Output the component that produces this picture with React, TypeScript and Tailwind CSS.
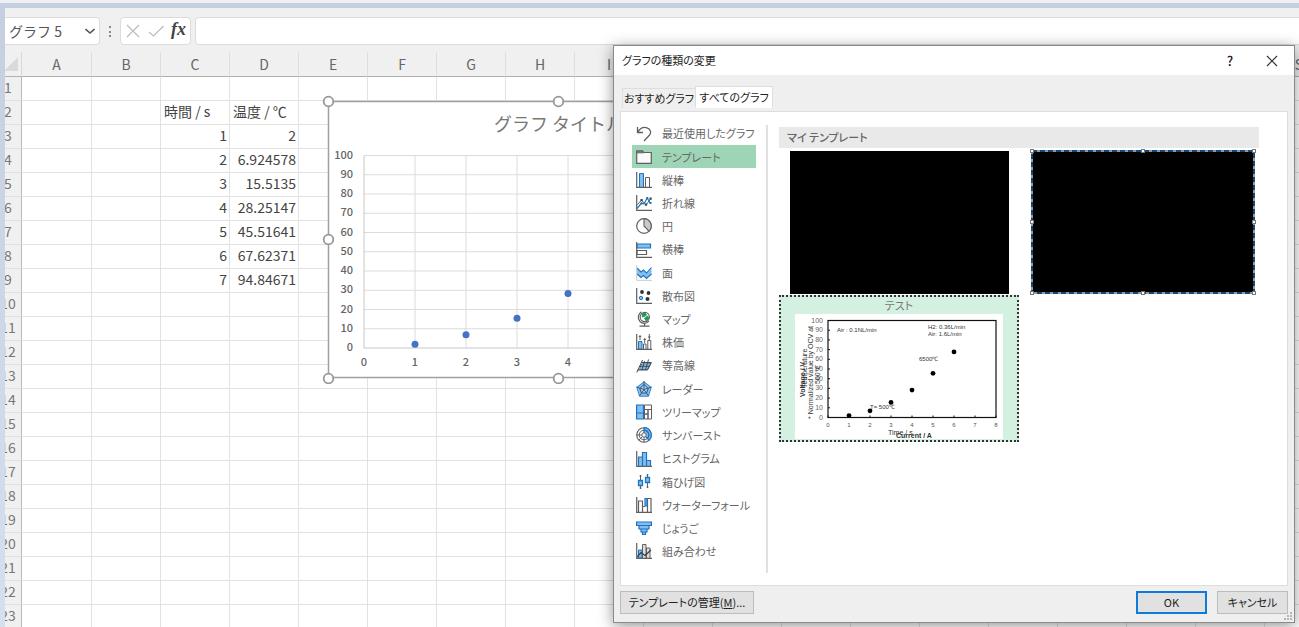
import type { ReactNode } from "react";

const columns = "ABCDEFGHIJKLMNOPQRS".split("");
const rowCount = 24;

const cells: Record<string, string> = {
  C2: "時間 / s",
  D2: "温度 / ℃",
  C3: "1",
  D3: "2",
  C4: "2",
  D4: "6.924578",
  C5: "3",
  D5: "15.5135",
  C6: "4",
  D6: "28.25147",
  C7: "5",
  D7: "45.51641",
  C8: "6",
  D8: "67.62371",
  C9: "7",
  D9: "94.84671",
};

const points = [
  [1, 2],
  [2, 6.92],
  [3, 15.51],
  [4, 28.25],
  [5, 45.52],
  [6, 67.62],
  [7, 94.85],
];

const G = "#5f5f5f";
const B = "#1b74c4";
const F = "#83beec";

const chartTypes: { label: string; icon: ReactNode }[] = [
  {
    label: "最近使用したグラフ",
    icon: (
      <path d="M1.5 1v5.5H7M1.8 6.2C4 2.500 7.500 .8 11 1.800c3.500 1 4.600 4.700 2.600 7.200L8 15" fill="none" stroke={G} strokeWidth="1.300" />
    ),
  },
  {
    label: "テンプレート",
    icon: (
      <>
        <path d="M.7 2h6l1 1.500h7.600V14.300H.7z" fill="#fafafa" stroke={G} strokeWidth="1.200" />
        <path d="M.7 2h6l.8 1.800H.7z" fill="#8a8a8a" stroke={G} />
      </>
    ),
  },
  {
    label: "縦棒",
    icon: (
      <>
        <path d="M3.500 15V1.500h4V15" fill={F} stroke={B} />
        <path d="M9.500 15V5.500h4V15" fill="#fff" stroke={G} />
        <path d="M.7 0v15.300H16" fill="none" stroke={G} strokeWidth="1.200" />
      </>
    ),
  },
  {
    label: "折れ線",
    icon: (
      <>
        <path d="M1.500 9.500L5.500 5l4.500 5 4.500-6" fill="none" stroke={G} />
        <path d="M1 13.500L5.500 8 8 9l3.200-6 3 5" fill="none" stroke={B} strokeWidth="1.200" />
        <path d="M4.500 4h2.200v2.200H4.500zM9 8.500h2.200v2.200H9zM13.500 2.500h2.200v2.200h-2.200z" fill="#444" />
        <path d="M4.500 7.500h2v2h-2zM10.200 2h2v2h-2zM13.500 7h2v2h-2z" fill={B} />
        <path d="M.7 0v15.300H16" fill="none" stroke={G} strokeWidth="1.200" />
      </>
    ),
  },
  {
    label: "円",
    icon: (
      <>
        <circle cx="8" cy="8" r="7.300" fill="#fff" stroke={G} strokeWidth="1.200" />
        <path d="M8 .7V8l5 5.200A7.300 7.300 0 0 0 8 .7z" fill="#c9c9c9" stroke={G} strokeWidth="1.100" />
      </>
    ),
  },
  {
    label: "横棒",
    icon: (
      <>
        <path d="M1 2h13.500v4H1z" fill={F} stroke={B} strokeWidth="1.200" />
        <path d="M1 8.500h9.500v4H1z" fill="#fff" stroke={G} strokeWidth="1.200" />
        <path d="M.7 0v15.300H16" fill="none" stroke={G} strokeWidth="1.200" />
      </>
    ),
  },
  {
    label: "面",
    icon: (
      <>
        <path d="M1 3.500l4 3.500 2.500-2 3 3L15.500 3v6l-5 4.500-3-3-2.500 2-4-3z" fill={F} />
        <path d="M1 3l4 4 2.500-2 3 3L15.500 2.500M1 9l4 3.500 2.500-2 3 3 5-4.500" fill="none" stroke={B} strokeWidth="1.100" />
        <path d="M.7 0v15.300H16" fill="none" stroke="#c8c8c8" />
      </>
    ),
  },
  {
    label: "散布図",
    icon: (
      <>
        <circle cx="6" cy="4" r="1.900" fill="#333" />
        <circle cx="12.500" cy="5" r="1.900" fill="#333" />
        <circle cx="11.500" cy="11" r="2" fill="#333" />
        <circle cx="5" cy="10" r="1.700" fill={F} stroke={B} />
        <path d="M.7 0v15.300H16" fill="none" stroke={G} strokeWidth="1.200" />
      </>
    ),
  },
  {
    label: "マップ",
    icon: (
      <>
        <circle cx="8.800" cy="6" r="4.600" fill="#fff" stroke={G} strokeWidth="1.100" />
        <path d="M6 3l3-1 1.500 2-2 1.500-2 .5zM8.500 7.500l3-2.500 1.500 1.500-2.500 3.500z" fill="#1d9b58" stroke="#1d9b58" />
        <path d="M5.500 .8A6.300 6.300 0 0 0 4 10.500c2.500 2.600 7 2.400 9-.5M8.500 12.500V15M3.500 15.200h10" fill="none" stroke={G} strokeWidth="1.300" />
      </>
    ),
  },
  {
    label: "株価",
    icon: (
      <>
        <path d="M2.500 15V7.500h3.500V15z" fill={F} stroke={B} />
        <path d="M7.500 15v-5h2.500v5M11.800 15V6.500h3V15" fill="#fff" stroke={G} />
        <path d="M4 1v5M2.800 2.500h2.400M8.700 4v5M7.500 5.500h2.400M13.300 0v6M12 3h2.600" fill="none" stroke={G} />
        <path d="M.7 0v15.300H16" fill="none" stroke={G} strokeWidth="1.200" />
      </>
    ),
  },
  {
    label: "等高線",
    icon: (
      <>
        <path d="M5.500 6l9.500-.5-3.500 6H3.500z" fill={F} stroke={B} strokeWidth=".8" />
        <path d="M.8 14.500L6.500 2M1.500 12h10L15.300 4.500H5M3.500 8.300H13M8.500 3L6 12M12.500 1.500L9.500 12" fill="none" stroke="#4a4a4a" />
      </>
    ),
  },
  {
    label: "レーダー",
    icon: (
      <>
        <path d="M8 .8l7.300 5.500-2.800 9h-9l-2.800-9z" fill={F} stroke={B} strokeWidth=".8" />
        <path d="M8 3.500l4.200 4L10.500 12h-5L3.800 7.500z" fill="#a9d2f2" stroke="#2f5474" />
        <path d="M8 0v8.500M.5 6L8 8.500M15.500 6L8 8.500M3.500 15L8 8.500l4.500 6.500" fill="none" stroke="#2f5474" strokeWidth=".9" />
      </>
    ),
  },
  {
    label: "ツリーマップ",
    icon: (
      <>
        <path d="M.6 1h6.900v8H.6zM.6 9h6.900v6H.6z" fill={F} stroke={B} strokeWidth="1.200" />
        <path d="M8.500 1h7v4.500h-7zM8.500 5.500h3.500V10H8.500zM12 5.500h3.500V15H12zM8.500 10H12v5H8.500z" fill="#fff" stroke={G} />
      </>
    ),
  },
  {
    label: "サンバースト",
    icon: (
      <>
        <circle cx="8" cy="8" r="7.300" fill="#fff" stroke={G} strokeWidth="1.100" />
        <path d="M8 .7a7.300 7.300 0 0 1 5 12.500L8 8z" fill={F} stroke={B} strokeWidth="1.200" />
        <circle cx="8" cy="8" r="4.800" fill="none" stroke={G} />
        <path d="M8 3.200a4.800 4.800 0 0 1 3.400 8.200" fill="none" stroke={B} strokeWidth="1.200" />
        <circle cx="8" cy="8" r="2.200" fill="#fff" stroke={G} />
        <path d="M.7 8h5M3 13l3.400-3.400M8 15.300v-5" stroke={G} fill="none" />
      </>
    ),
  },
  {
    label: "ヒストグラム",
    icon: (
      <>
        <path d="M2.500 15V6h4v9M6.500 15V1.500h4V15M10.500 15V9.500h4V15" fill={F} stroke={B} strokeWidth="1.200" />
        <path d="M.7 0v15.300H16" fill="none" stroke={G} strokeWidth="1.200" />
      </>
    ),
  },
  {
    label: "箱ひげ図",
    icon: (
      <>
        <path d="M4.500 1v14M11.500 0v14M3.500 2h2M3.500 14h2M10.500 1h2M10.500 13h2" stroke={G} fill="none" />
        <path d="M2.500 6.500h4v5h-4zM9.500 3.500h4v5h-4z" fill={F} stroke={B} strokeWidth="1.300" />
      </>
    ),
  },
  {
    label: "ウォーターフォール",
    icon: (
      <>
        <path d="M2.500 15V4h4v11M6.500 4v5.500h2.500M11.500 15V1.500H15V15M9 1.500h2.500" fill="#fff" stroke={G} strokeWidth="1.200" />
        <path d="M9 1.500h2v7.500H9z" fill={F} stroke={B} strokeWidth="1.200" />
        <path d="M.7 0v15.300H16" fill="none" stroke={G} strokeWidth="1.200" />
      </>
    ),
  },
  {
    label: "じょうご",
    icon: (
      <path d="M.6 2h14.800v3.500H.6zM3 5.500h10V9H3zM5 9h6v3H5zM6.500 12h3v2.500h-3z" fill={F} stroke={B} strokeWidth="1.200" />
    ),
  },
  {
    label: "組み合わせ",
    icon: (
      <>
        <path d="M2.500 15V7h3.500v8z" fill={F} stroke={B} />
        <path d="M6.500 15V1.500H10V15M10.500 15V5h3.500v10" fill="#dedede" stroke={G} />
        <path d="M1 14l4-4.500 4 3 6-5.500" fill="none" stroke="#3c3c3c" strokeWidth="1.200" />
        <path d="M.7 0v15.300H16" fill="none" stroke={G} strokeWidth="1.200" />
      </>
    ),
  },
];

function FormulaBar() {
  return (
    <div className="flex h-11 shrink-0 items-start gap-1 bg-[#f0f0f0] pt-[9px]">
      <div className="flex h-7 w-[95px] items-center rounded-r border border-l-0 border-[#dcdcdc] bg-white pl-1">
        <input
          aria-label="名前ボックス"
          defaultValue="グラフ 5"
          className="w-[76px] bg-transparent text-sm text-[#555] outline-none"
        />
        <button aria-label="名前の一覧">
          <svg className="size-[10px]" viewBox="0 0 10 10" fill="none" stroke="#555" strokeWidth="1.600">
            <path d="M0.500 3l4.500 4 4.500-4" />
          </svg>
        </button>
      </div>
      <svg className="mx-[3px] h-7 w-[6px]" viewBox="0 0 6 28" fill="#888">
        <path d="M2 9h2v2H2zM2 14h2v2H2zM2 18h2v2H2z" />
      </svg>
      <div className="flex h-7 w-[71px] items-center justify-between rounded border border-[#dcdcdc] bg-white px-1">
        <button aria-label="キャンセル">
          <svg className="size-4" viewBox="0 0 16 16" fill="none" stroke="#bcbcbc" strokeWidth="1.200">
            <path d="M2 2l12 12M14 2L2 14" />
          </svg>
        </button>
        <button aria-label="入力">
          <svg className="size-4" viewBox="0 0 16 16" fill="none" stroke="#bcbcbc" strokeWidth="1.200">
            <path d="M1 9l4.500 4L15.500 3" />
          </svg>
        </button>
        <button
          aria-label="関数の挿入"
          className="pb-1 font-['Liberation_Serif',serif] text-lg leading-5 font-bold text-[#444] italic"
        >
          fx
        </button>
      </div>
      <input
        aria-label="数式バー"
        className="h-7 min-w-0 flex-1 rounded-l border border-r-0 border-[#dcdcdc] bg-white px-2 text-sm outline-none"
      />
    </div>
  );
}

function Sheet() {
  return (
    <div className="min-h-0 flex-1 overflow-hidden bg-[#f0f0f0]">
      <table className="-ml-[10px] w-[1339px] table-fixed border-separate border-spacing-0 text-sm leading-5 text-[#444]">
        <colgroup>
          <col className="w-[27px]" />
          {columns.map((c) => (
            <col key={c} className={c === "A" ? "w-[70px]" : "w-[69px]"} />
          ))}
        </colgroup>
        <thead>
          <tr className="h-[25px] text-[#666]">
            <th className="border-r border-b border-r-[#d8d8d8] border-b-[#b0b0b0] p-0">
              <svg className="ml-auto mr-[3px] size-[14px]" viewBox="0 0 14 14">
                <path d="M14 0v14H0z" fill="#dadada" />
              </svg>
            </th>
            {columns.map((c) => (
              <th key={c} scope="col" className="border-r border-b border-r-[#dedede] border-b-[#b0b0b0] p-0 font-normal">
                {c}
              </th>
            ))}
          </tr>
        </thead>
        <tbody>
          {Array.from({ length: rowCount }, (_, i) => i + 1).map((r) => (
            <tr key={r} className="h-6">
              <th
                scope="row"
                className="border-r border-b border-r-[#b8b8b8] border-b-[#e2e2e2] p-0 pb-[3px] text-center font-normal text-[#777]"
              >
                {r}
              </th>
              {columns.map((c) => {
                const value = cells[c + r];
                return (
                  <td
                    key={c}
                    className={
                      "border-r border-b border-[#e2e2e2] bg-white p-0 pb-[3px] whitespace-nowrap " +
                      (r > 2 ? "pr-[2px] text-right" : "pl-[3px] text-left")
                    }
                  >
                    {value}
                  </td>
                );
              })}
            </tr>
          ))}
        </tbody>
      </table>
    </div>
  );
}

function SheetChart() {
  const px = (x: number) => 364 + x * 51;
  const py = (y: number) => 348 - y * 1.925;
  const ticks = [0, 10, 20, 30, 40, 50, 60, 70, 80, 90, 100];
  const xs = [0, 1, 2, 3, 4, 5, 6, 7, 8];
  return (
    <svg
      className="absolute top-[95px] left-[322px] h-[289px] w-[473px] font-['Noto_Sans_CJK_JP',sans-serif]"
      viewBox="322 95 473 289"
      role="img"
      aria-label="グラフ タイトル"
    >
      <rect x="328.500" y="101.500" width="460" height="276" fill="#fff" stroke="#a0a0a0" strokeWidth="1.500" />
      {ticks.map((t) => (
        <g key={t}>
          <path d={`M364 ${py(t)}H772`} stroke={t === 0 ? "#c8c8c8" : "#dcdcdc"} />
          <text x="353" y={py(t) + 3} textAnchor="end" fontSize="11" fontWeight="500" fill="#666">
            {t}
          </text>
        </g>
      ))}
      {xs.map((x) => (
        <g key={x}>
          <path d={`M${px(x)} 155.500V348`} stroke={x === 0 ? "#c8c8c8" : "#dcdcdc"} />
          <text x={px(x)} y="366" textAnchor="middle" fontSize="11" fontWeight="500" fill="#666">
            {x}
          </text>
        </g>
      ))}
      {points.map(([x, y]) => (
        <circle key={x} cx={px(x)} cy={py(y)} r="3.500" fill="#4472c4" />
      ))}
      <text x="559" y="131" textAnchor="middle" fontSize="18" fill="#777">
        グラフ タイトル
      </text>
      {[
        [328, 101],
        [558, 101],
        [788, 101],
        [328, 239],
        [788, 239],
        [328, 378],
        [558, 378],
        [788, 378],
      ].map(([x, y]) => (
        <circle key={`${x}-${y}`} cx={x + 0.5} cy={y + 0.5} r="4.800" fill="#fff" stroke="#989898" strokeWidth="1.800" />
      ))}
    </svg>
  );
}

function TemplatePreview() {
  const px = (x: number) => 827 + x * 21;
  const py = (y: number) => 417.5 - y * 0.97;
  return (
    <svg
      className="h-[125px] w-[208px] bg-white font-['Liberation_Sans',sans-serif]"
      viewBox="794 314 208 125"
      fontSize="6"
      fill="#333"
      role="img"
      aria-label="テスト"
    >
      <rect x="827" y="320.500" width="168" height="97" fill="none" stroke="#111" strokeWidth="1.200" />
      {[0, 10, 20, 30, 40, 50, 60, 70, 80, 90, 100].map((t) => (
        <g key={t}>
          <path d={`M827 ${py(t)}h2`} stroke="#111" />
          <text x="822" y={py(t) + 2} textAnchor="end" fontSize="7" fill="#666">
            {t}
          </text>
        </g>
      ))}
      {[0, 1, 2, 3, 4, 5, 6, 7, 8].map((x) => (
        <g key={x}>
          <path d={`M${px(x)} 417.500v-2`} stroke="#111" />
          <text x={px(x)} y="427" textAnchor="middle" fill="#555">
            {x}
          </text>
        </g>
      ))}
      {points.slice(0, 6).map(([x, y]) => (
        <circle key={x} cx={px(x)} cy={py(y)} r="2.400" fill="#000" />
      ))}
      <text x="836" y="332">Air : 0.1NL/min</text>
      <text x="927" y="329">H2: 0.36L/min</text>
      <text x="927" y="336">Air: 1.6L/min</text>
      <text x="918" y="361">6500℃</text>
      <text x="869" y="409">T= 500℃</text>
      <text x="887" y="435" fontSize="7">Time / s</text>
      <text x="895" y="438" fontSize="7" fontWeight="700">Current / A</text>
      <text transform="translate(804 397) rotate(-90)" fontSize="7" fontWeight="700">Voltage / V</text>
      <text transform="translate(806 388) rotate(-90)" fontSize="7">Temperature</text>
      <text transform="translate(812 419) rotate(-90)" fontSize="7">* Normalized value by OCV at</text>
      <text transform="translate(819 384) rotate(-90)" fontSize="7">500℃</text>
    </svg>
  );
}

function SelectedTemplate() {
  return (
    <button aria-label="テンプレート 2" className="mt-[1px] ml-[11px] block">
      <svg className="h-[146px] w-[226px]" viewBox="0 0 226 146">
        <rect x="2" y="2" width="222" height="142" fill="#000" stroke="#999" strokeWidth="2" />
        <rect x="2" y="2" width="222" height="142" fill="none" stroke="#12487a" strokeWidth="2" strokeDasharray="5 3" />
        {[
          [0, 0],
          [111, 0],
          [222, 0],
          [0, 71],
          [222, 71],
          [0, 142],
          [111, 142],
          [222, 142],
        ].map(([x, y]) => (
          <rect key={`${x}-${y}`} x={x + 0.5} y={y + 0.5} width="3" height="3" fill="#fff" stroke="#777" />
        ))}
      </svg>
    </button>
  );
}

function ChartTypeDialog() {
  return (
    <section
      role="dialog"
      aria-labelledby="dialog-title"
      className="absolute top-[45px] left-[613px] flex h-[578px] w-[682px] flex-col border border-[#8a8a8a] bg-[#efefef] text-[11px] text-[#222] shadow-[0_3px_14px_rgba(0,0,0,0.42)] [font-feature-settings:'palt']"
    >
      <header className="flex h-[29px] shrink-0 items-center bg-white pr-4 pl-2">
        <h1 id="dialog-title" className="flex-1 text-[11px]">
          グラフの種類の変更
        </h1>
        <button aria-label="ヘルプ" className="w-4 text-[13px] font-medium">
          ?
        </button>
        <button aria-label="閉じる" className="ml-7">
          <svg className="size-3" viewBox="0 0 12 12" fill="none" stroke="#333" strokeWidth="1.200">
            <path d="M1 1l10 10M11 1L1 11" />
          </svg>
        </button>
      </header>

      <div role="tablist" className="mt-[11px] ml-2 flex h-[25px] shrink-0 items-start">
        <button
          role="tab"
          aria-selected="false"
          className="mt-[2px] h-5 w-[73px] border border-r-0 border-b-0 border-[#dedede] whitespace-nowrap"
        >
          おすすめグラフ
        </button>
        <button
          role="tab"
          aria-selected="true"
          className="h-[22px] w-[78px] border border-[#dedede] border-b-white bg-white whitespace-nowrap"
        >
          すべてのグラフ
        </button>
      </div>

      <div className="mx-[6px] flex min-h-0 flex-1 border border-[#dedede] bg-white">
        <ul className="mt-[10px] mb-[22px] ml-[11px] grid w-[124px] auto-rows-fr text-[#666]">
          {chartTypes.map(({ label, icon }, i) => (
            <li key={label}>
              <button
                className={
                  "flex h-full w-full items-center gap-[10px] pl-1 whitespace-nowrap " +
                  (i === 1 ? "bg-[#9fd5b7]" : "")
                }
              >
                <svg className="size-4 shrink-0" viewBox="0 0 16 16">
                  {icon}
                </svg>
                {label}
              </button>
            </li>
          ))}
        </ul>
        <div className="mt-[13px] mb-3 ml-[10px] w-[2px] bg-[#e0e0e0]" />
        <div className="mt-[15px] ml-[11px] w-[480px]">
          <h2 className="h-[21px] bg-[#e9e9e9] pl-2 text-[11px] leading-[21px] font-medium text-[#666]">マイ テンプレート</h2>
          <div className="grid grid-cols-2">
            <button aria-label="テンプレート 1" className="mt-[3px] ml-[11px] h-[143px] w-[219px] bg-black" />
            <SelectedTemplate />
            <button className="flex h-[147px] w-[240px] flex-col items-center border-2 border-dotted border-[#333] bg-[#d3f0e0] text-[#777]">
              <span className="leading-[17px]">テスト</span>
              <TemplatePreview />
            </button>
          </div>
        </div>
      </div>

      <footer className="flex h-9 shrink-0 items-start gap-[10px] px-[6px] pt-[5px]">
        <button className="mr-auto h-[23px] w-[134px] border border-[#bcbcbc] bg-[#e1e1e1]">
          テンプレートの管理(<u>M</u>)...
        </button>
        <button className="h-[23px] w-[71px] border-2 border-[#0f7bd8] bg-[#e1e1e1]">OK</button>
        <button className="h-[23px] w-[71px] border border-[#bcbcbc] bg-[#e1e1e1]">キャンセル</button>
      </footer>
      <svg className="absolute right-[2px] bottom-[2px] size-2" viewBox="0 0 8 8" fill="#b5b5b5">
        <path d="M6 0h2v2H6zM3 3h2v2H3zM6 3h2v2H6zM0 6h2v2H0zM3 6h2v2H3zM6 6h2v2H6z" />
      </svg>
    </section>
  );
}

export default function App() {
  return (
    <main className="relative flex h-screen flex-col overflow-hidden bg-[#eef0f4] pt-[3px] font-['Noto_Sans_CJK_JP',sans-serif]">
      <div className="flex min-h-0 flex-1 flex-col bg-linear-to-b from-[#c5cfe0] to-[#d6dfed] pt-[5px] pl-[5px]">
        <FormulaBar />
        <Sheet />
      </div>
      <SheetChart />
      <ChartTypeDialog />
    </main>
  );
}
